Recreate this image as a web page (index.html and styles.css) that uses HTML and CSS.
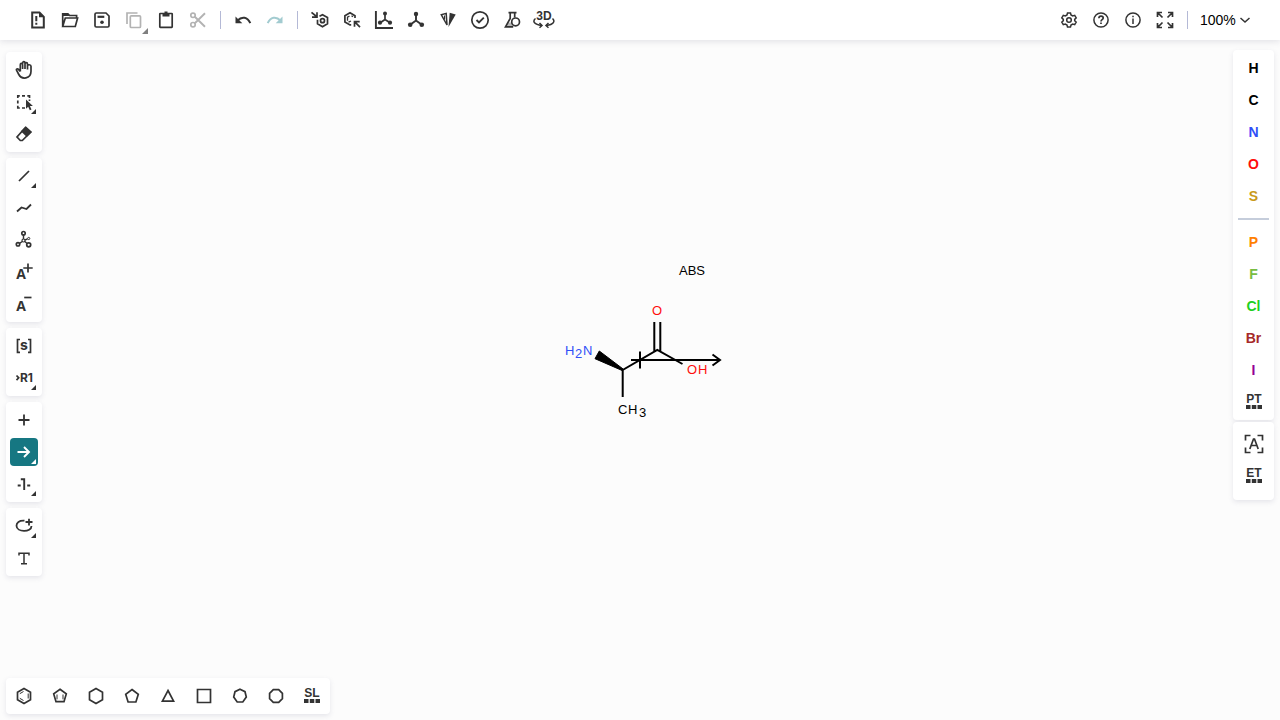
FILE: index.html
```html
<!DOCTYPE html>
<html lang="en">
<head>
<meta charset="utf-8">
<title>Molecule editor</title>
<link rel="stylesheet" href="styles.css">
</head>
<body>
<div class="app">
  <header class="topbar">
    <div class="group">
      <button class="tool" aria-label="Clear canvas"><svg class="icon" viewBox="0 0 24 24"><path d="M6.200 4.500h7.300l4.300 4.300v10.700H6.200z" stroke-width="2"/><path d="M13 4v5.200h5.200z" class="fill"/><path d="M10.300 8v5.200M10.300 14.700v2" stroke-width="2"/></svg></button>
      <button class="tool" aria-label="Open"><svg class="icon" viewBox="0 0 24 24"><path d="M4.700 18V5.800h5.200l1.700 1.700h7V10M4.700 18.500 7.300 10h12.300l-2.300 8.500z"/><path d="M4.500 5.500h5l2 2.500h-7z" class="fill"/></svg></button>
      <button class="tool" aria-label="Save"><svg class="icon" viewBox="0 0 24 24"><path d="M5 6.300Q5 5 6.300 5h9.700l3 3v9.700q0 1.300-1.300 1.300H6.300Q5 19 5 17.700z"/><path d="M7.500 8.800h6.800" stroke-width="2.200"/><circle cx="12" cy="14.300" r="1.800" class="fill"/></svg></button>
      <button class="tool off more edge" aria-label="Copy" disabled><svg class="icon" viewBox="0 0 24 24"><rect x="8.300" y="7.800" width="10.200" height="11.700" rx="1"/><path d="M5 16V5h10.500"/></svg></button>
      <button class="tool" aria-label="Paste"><svg class="icon" viewBox="0 0 24 24"><rect x="5.800" y="5.500" width="12.400" height="13.800" rx=".5"/><path d="M8.500 5h7v3.500h-7zM10.500 3.500h3V6h-3z" class="fill"/></svg></button>
      <button class="tool off" aria-label="Cut" disabled><svg class="icon" viewBox="0 0 24 24"><circle cx="7" cy="7.300" r="2.200"/><circle cx="7" cy="16.700" r="2.200"/><path d="M8.800 8.800 19 18.800M8.800 15.200 19 5.200" stroke-width="1.900"/></svg></button>
    </div>
    <span class="rule"></span>
    <div class="group">
      <button class="tool" aria-label="Undo"><svg class="icon" viewBox="0 0 24 24"><path d="M6.500 12.500c4.500-4.500 10-3.500 12.800 2.700" stroke-width="2"/><path d="M4.500 8.500v6.700h6.800z" class="fill"/></svg></button>
      <button class="tool redo" aria-label="Redo" disabled><svg class="icon" viewBox="0 0 24 24"><path d="M17.500 12.500C13 8 7.500 9 4.700 15.200" stroke-width="2"/><path d="M19.500 8.500v6.700h-6.800z" class="fill"/></svg></button>
    </div>
    <span class="rule"></span>
    <div class="group">
      <button class="tool" aria-label="Aromatize"><svg class="icon" viewBox="0 0 24 24"><path d="m11.500 8.300 3-1.600 5 2.900v6.200l-5 2.900-5-2.900v-4M3.500 4.300l5 4.200M9 4.200v5H4"/><circle cx="14.500" cy="12.700" r="2"/></svg></button>
      <button class="tool" aria-label="Dearomatize"><svg class="icon" viewBox="0 0 24 24"><path d="M15 10V7.700L10 4.800 4.900 7.700v6.200l5.100 3h1.200M20 19.200l-5-5M14.500 18.700v-5h5.200"/><path d="M7.500 12.800V9.200l2-1.200M11.500 7.800l1.500 1M8.500 14.200l2.500-1.200" stroke-width="1.300"/></svg></button>
      <button class="tool" aria-label="Layout"><svg class="icon" viewBox="0 0 24 24"><path d="M3.900 3v17H21" stroke-width="1.900"/><path d="M13 6v5.500L8.300 14.700M13 11.500l5 3.200"/><circle cx="13" cy="5.500" r="2" class="fill"/><circle cx="8" cy="14.700" r="2.100" class="fill"/><circle cx="18" cy="14.700" r="2.100" class="fill"/></svg></button>
      <button class="tool" aria-label="Clean up"><svg class="icon" viewBox="0 0 24 24"><path d="M12 6.500v6l-5.500 4M12 12.500l5.500 4" stroke-width="1.900"/><circle cx="12" cy="6" r="2.200" class="fill"/><circle cx="6.200" cy="16.700" r="2.300" class="fill"/><circle cx="17.800" cy="16.700" r="2.300" class="fill"/></svg></button>
      <button class="tool" aria-label="Calculate CIP"><svg class="icon" viewBox="0 0 24 24"><path d="M12.500 19 13.700 4.700l6 1.800z" class="fill"/><path d="m5.300 6.800 4.900-1.400.8 11.600z" stroke-width="1.500"/><path d="M8.500 7.500v4" stroke-width="1.200"/></svg></button>
      <button class="tool" aria-label="Check structure"><svg class="icon" viewBox="0 0 24 24"><circle cx="12" cy="12" r="8.200" stroke-width="1.700"/><path d="m8.500 12 2.500 2.500 4.800-4.800" stroke-width="1.900"/></svg></button>
      <button class="tool" aria-label="Calculated values"><svg class="icon" viewBox="0 0 24 24"><path d="M8.500 4.700h8M10.200 5v5.500l-4.700 8.300h7.700M14.700 5v4.500"/><circle cx="15.600" cy="13.900" r="3.900"/><path d="M7.500 14.500h4l2 4.300H5.500z" class="fill" opacity=".35"/></svg></button>
      <button class="tool" aria-label="3D viewer"><svg class="icon" viewBox="0 0 24 24"><text x="12" y="12" class="glyph three">3D</text><path d="M3.500 10.500C0 13.500 2.500 16.500 9.500 17.500M20.500 10.500c3 3 1 6-6 7" stroke-width="1.500"/><path d="m7.500 15 2.500 2.500-2.500 2.200M16.500 15 14 17.500l2.500 2.200" stroke-width="1.500"/></svg></button>
    </div>
    <div class="group end">
      <button class="tool" aria-label="Settings"><svg class="icon" viewBox="0 0 24 24"><path d="M10.500 5h3l.5 2 1.700 1 2-.6 1.500 2.500-1.500 1.500v1.300l1.500 1.500-1.500 2.500-2-.6-1.700 1-.5 2h-3l-.5-2-1.700-1-2 .6-1.500-2.500 1.500-1.500v-1.300L4.800 9.900l1.500-2.500 2 .6 1.700-1z" stroke-width="1.500"/><circle cx="12" cy="12" r="2.300" stroke-width="1.500"/></svg></button>
      <button class="tool" aria-label="Help"><svg class="icon" viewBox="0 0 24 24"><circle cx="12" cy="12" r="7.100" stroke-width="1.500"/><path d="M9.900 10.200c0-3 4.300-2.700 4.300-.3 0 1.700-2.200 1.700-2.200 3.500M12 14.600v1.500"/></svg></button>
      <button class="tool" aria-label="About"><svg class="icon" viewBox="0 0 24 24"><circle cx="12" cy="12" r="7.100" stroke-width="1.500"/><path d="M12 10.500V16M12 7.700v1.500" stroke-width="1.500"/></svg></button>
      <button class="tool" aria-label="Full screen"><svg class="icon" viewBox="0 0 24 24"><path d="M4.500 9V4.500H9M15 4.500h4.500V9M4.500 15v4.500H9M15 19.500h4.500V15M4.500 4.500l5 5M19.500 4.500l-5 5M4.500 19.500l5-5M19.500 19.500l-5-5"/></svg></button>
    </div>
    <span class="rule"></span>
    <div class="zoom">
      <select class="zoom-select" aria-label="Zoom"><option>100%</option></select>
      <svg class="chevron" viewBox="0 0 12 12"><path d="m1.500 4 4.500 4 4.500-4"/></svg>
    </div>
  </header>

  <main class="work">
    <div class="canvas">
      <svg class="drawing" viewBox="540 260 200 200" role="img" aria-label="Alanine with reaction arrow">
        <g class="bonds">
          <path d="M622.700 397v-27L657.300 350l25.200 14M654.300 351v-29M660.300 351v-29"/>
          <path d="M631 360h89M640 351.500v17M712.500 354.500 720 360l-7.500 5.500"/>
          <path d="m599.300 351-4.300 7.700 27.200 11.800.9-1.500z" class="wedge"/>
        </g>
        <text x="679" y="275">ABS</text>
        <text x="652" y="315" class="oxygen">O</text>
        <g class="nitrogen"><text x="565" y="355">H</text><text x="575" y="358">2</text><text x="583" y="355">N</text></g>
        <g class="oxygen"><text x="687" y="374">O</text><text x="698" y="374">H</text></g>
        <g><text x="618" y="414">C</text><text x="628" y="414">H</text><text x="639" y="417">3</text></g>
      </svg>
    </div>

    <nav class="left" aria-label="Tools">
      <div class="card">
        <button class="tool" aria-label="Hand"><svg class="icon" viewBox="0 0 24 24"><path d="M8.300 13.500V6.700c0-1.800 2.300-1.800 2.300 0V11M10.600 6V5c0-1.800 2.400-1.800 2.400 0v6M13 6c0-1.800 2.500-1.800 2.500 0v5.500M15.500 8c0-1.800 3.500-1.600 3.500.3v5c0 8-9.500 8.500-12.200 3.200l-2.300-4.300c-.6-1.300 1.300-1.800 2-.8l1.800 2.100"/></svg></button>
        <button class="tool more" aria-label="Select"><svg class="icon" viewBox="0 0 24 24"><path d="M5.800 8V5.800h2M10 5.800h3M15.300 5.800h2.200V8M5.800 10.500v3M5.800 15.800V18h2M10 18h3M17.500 9.500v1.500"/><path d="M14 9.500v9.200l2.200-2 1.600 3.600 1.700-.8-1.600-3.400h3z" class="fill"/></svg></button>
        <button class="tool" aria-label="Erase"><svg class="icon" viewBox="0 0 24 24"><path d="M13.500 5.500 18.800 10l-8.500 8.500H8.300L5 15z"/><path d="m14 4.500 5.800 5.500-5 5-6-5.700z" class="fill"/></svg></button>
      </div>
      <div class="card">
        <button class="tool more" aria-label="Single bond"><svg class="icon" viewBox="0 0 24 24"><path d="M7 17 17 7"/></svg></button>
        <button class="tool" aria-label="Chain"><svg class="icon" viewBox="0 0 24 24"><path d="m5 15.500 4.500-4 5 1.500 4.500-4.500" stroke-width="1.800"/></svg></button>
        <button class="tool" aria-label="Stereochemistry"><svg class="icon" viewBox="0 0 24 24"><circle cx="11.500" cy="5.200" r="1.700"/><circle cx="6" cy="16.300" r="1.700"/><circle cx="16.700" cy="16.800" r="2"/><circle cx="16.700" cy="10.500" r="1.100" stroke-width="1"/><circle cx="11.500" cy="12.500" r="1.500" stroke-width="1.200"/><path d="M11.500 7v4M10.300 13.500 7.500 15.300M12.800 13.500l2.300 2M13 12l2.500-1.200" stroke-width="1.400"/></svg></button>
        <button class="tool" aria-label="Charge plus"><svg class="icon" viewBox="0 0 24 24"><text x="9" y="19" class="glyph letter">A</text><path d="M11.300 8h9.400M16 3.500v9" stroke-width="1.700"/></svg></button>
        <button class="tool" aria-label="Charge minus"><svg class="icon" viewBox="0 0 24 24"><text x="9" y="19" class="glyph letter">A</text><path d="M12.200 5.500h7.300"/></svg></button>
      </div>
      <div class="card">
        <button class="tool" aria-label="S-group"><svg class="icon" viewBox="0 0 24 24"><path d="M8 5.500H5.500v12.800H8M16 5.500h2.500v12.800H16" stroke-width="1.700"/><text x="12" y="16" class="glyph sgroup">s</text></svg></button>
        <button class="tool more" aria-label="R-group"><svg class="icon" viewBox="0 0 24 24"><path d="m4.500 9.500 2.200 2.300-2.200 2.300"/><text x="14.500" y="16" class="glyph rgroup">R1</text></svg></button>
      </div>
      <div class="card">
        <button class="tool" aria-label="Reaction plus"><svg class="icon" viewBox="0 0 24 24"><path d="M6.500 12h11M12 6.500v11" stroke-width="1.800"/></svg></button>
        <button class="tool more active" aria-label="Arrow" aria-pressed="true"><svg class="icon" viewBox="0 0 24 24"><path d="M5.500 12h11.500M12 7l5 5-5 5" stroke-width="1.900"/></svg></button>
        <button class="tool more" aria-label="Reaction mapping"><svg class="icon" viewBox="0 0 24 24"><path d="M5.700 13.500h3M15.200 13.500h3M8.800 7.300h3.400V18" stroke-width="1.900"/></svg></button>
      </div>
      <div class="card">
        <button class="tool more" aria-label="Shape"><svg class="icon" viewBox="0 0 24 24"><path d="M12.500 6.700C7 6.300 4.500 8.800 4.500 11.700c0 6.800 15 7 15 .3M13.500 8h7M17 4.700v6.700" stroke-width="1.800"/></svg></button>
        <button class="tool" aria-label="Text"><svg class="icon" viewBox="0 0 24 24"><path d="M7 9.500V7.300h10v2.200M12 7.500v10.300M9 17.700h6" stroke-width="1.500"/></svg></button>
      </div>
    </nav>

    <nav class="right" aria-label="Atoms">
      <div class="card">
        <button class="tool atom">H</button>
        <button class="tool atom">C</button>
        <button class="tool atom n">N</button>
        <button class="tool atom o">O</button>
        <button class="tool atom s">S</button>
        <span class="split"></span>
        <button class="tool atom p">P</button>
        <button class="tool atom f">F</button>
        <button class="tool atom cl">Cl</button>
        <button class="tool atom br">Br</button>
        <button class="tool atom i">I</button>
        <button class="tool" aria-label="Periodic table"><svg class="icon" viewBox="0 0 24 24"><text x="12" y="13" class="glyph table">PT</text><path d="M4 15h4.500v4H4zM9.800 15h4.500v4H9.800zM15.500 15H20v4h-4.500z" class="fill"/></svg></button>
      </div>
      <div class="card extras">
        <button class="tool" aria-label="Any atom"><svg class="icon" viewBox="0 0 24 24"><path d="M3.500 8.500v-5h5M15.500 3.500h5v5M3.500 15.500v5h5M15.500 20.500h5v-5"/><path d="m7.800 17 3.700-10h1l3.700 10M9 13.500h6"/></svg></button>
        <button class="tool" aria-label="Extended table"><svg class="icon" viewBox="0 0 24 24"><text x="12" y="13" class="glyph table">ET</text><path d="M4 15h4.500v4H4zM9.800 15h4.500v4H9.800zM15.500 15H20v4h-4.500z" class="fill"/></svg></button>
      </div>
    </nav>

    <nav class="card bottom" aria-label="Templates">
      <button class="tool" aria-label="Benzene"><svg class="icon" viewBox="0 0 24 24"><path d="m12 4.500 6.500 3.700v7.600L12 19.500l-6.500-3.700V8.200z"/><path d="M7.800 9.700 11.500 7.500M16.200 9.500v5M7.800 14.300l3.700 2.200" stroke-width="1"/></svg></button>
      <button class="tool" aria-label="Cyclopentadiene"><svg class="icon" viewBox="0 0 24 24"><path d="m12 5.200 6.300 4.700-2.300 7.800H8L5.700 9.900z"/><path d="M9 10.500v4.800M15 10.500v4.800" stroke-width="1"/></svg></button>
      <button class="tool" aria-label="Cyclohexane"><svg class="icon" viewBox="0 0 24 24"><path d="m12 4.500 6.500 3.700v7.600L12 19.500l-6.500-3.700V8.200z"/></svg></button>
      <button class="tool" aria-label="Cyclopentane"><svg class="icon" viewBox="0 0 24 24"><path d="m12 5.500 6.300 4.700-2.400 7.800H8.100L5.700 10.200z"/></svg></button>
      <button class="tool" aria-label="Cyclopropane"><svg class="icon" viewBox="0 0 24 24"><path d="m12 6.500 5.600 10.700H6.400z"/></svg></button>
      <button class="tool" aria-label="Cyclobutane"><svg class="icon" viewBox="0 0 24 24"><path d="M5.500 5.500h13v13h-13z"/></svg></button>
      <button class="tool" aria-label="Cycloheptane"><svg class="icon" viewBox="0 0 24 24"><path d="m12 5.300 5 2.400 1.300 5.300-3.500 5H9.200l-3.500-5L7 7.700z"/></svg></button>
      <button class="tool" aria-label="Cyclooctane"><svg class="icon" viewBox="0 0 24 24"><path d="M9.300 5.600h5.400l3.700 3.700v5.400l-3.700 3.700H9.300l-3.700-3.700V9.300z"/></svg></button>
      <button class="tool" aria-label="Structure library"><svg class="icon" viewBox="0 0 24 24"><text x="12" y="13" class="glyph table">SL</text><path d="M4 15h4.500v4H4zM9.800 15h4.500v4H9.800zM15.500 15H20v4h-4.500z" class="fill"/></svg></button>
    </nav>
  </main>
</div>
</body>
</html>
```
FILE: styles.css
```css
* { box-sizing: border-box; }

body {
  margin: 0;
  background: #fcfcfc;
  color: #000;
  font-family: "Liberation Sans", Arial, sans-serif;
  font-size: 14px;
}

.app {
  position: relative;
  display: flex;
  flex-direction: column;
  min-height: 100vh;
}

.topbar {
  position: relative;
  z-index: 1;
  display: flex;
  align-items: center;
  gap: 8px;
  padding: 6px 0 6px 24px;
  background: #fff;
  box-shadow: 0 2px 6px rgba(103, 104, 132, 0.16);
}

.group { display: flex; gap: 4px; }
.end { margin-left: auto; }

.rule {
  width: 1px;
  height: 18px;
  background: #b4b9d6;
}

.tool {
  position: relative;
  display: flex;
  flex: none;
  align-items: center;
  justify-content: center;
  width: 28px;
  height: 28px;
  padding: 0;
  border: 0;
  border-radius: 4px;
  background: none;
  color: #333;
  font: inherit;
}

.icon {
  flex: none;
  width: 24px;
  height: 24px;
  fill: none;
  stroke: currentColor;
  stroke-width: 1.7;
}

.icon .fill { fill: currentColor; stroke: none; }
.off { color: #b3b3b3; }
.redo { color: #a2cbd0; }
.active { background: #167782; color: #fff; }

.more::after {
  content: "";
  position: absolute;
  right: 2px;
  bottom: 2px;
  width: 6px;
  height: 6px;
  background: currentColor;
  clip-path: polygon(100% 0, 100% 100%, 0 100%);
}

.edge::after { right: 0; bottom: 0; background: #7f7f7f; }

.glyph {
  fill: currentColor;
  stroke: none;
  font-family: "Liberation Sans", Arial, sans-serif;
  font-weight: 700;
  text-anchor: middle;
}

.letter { font-family: "Open Sans", sans-serif; font-size: 14px; }
.table { font-size: 12px; }
.sgroup { font-family: Inter, sans-serif; font-size: 14px; }
.rgroup { font-family: Inter, sans-serif; font-size: 12px; }
.three { font-size: 12px; }

.zoom {
  position: relative;
  width: 84px;
}

.zoom-select {
  width: 100%;
  height: 28px;
  padding: 0 0 0 4px;
  border: 0;
  appearance: none;
  background: none;
  color: #000;
  font: inherit;
}

.chevron {
  position: absolute;
  top: 8px;
  left: 43px;
  width: 12px;
  height: 12px;
  fill: none;
  stroke: #333;
  stroke-width: 1.5;
  pointer-events: none;
}

.work {
  display: grid;
  flex: 1;
  grid-template-columns: auto 1fr auto;
  grid-template-rows: 1fr auto;
  padding: 0 6px 6px;
}

/* The canvas lies beneath every toolbar. */
.canvas {
  position: absolute;
  inset: 0;
  display: flex;
  align-items: center;
  justify-content: center;
}

.drawing {
  width: 200px;
  height: 200px;
  font-size: 13px;
}

.bonds { fill: none; stroke: #000; stroke-width: 2; }
.wedge { fill: #000; stroke-width: 1; }
.nitrogen { fill: #304ff7; }
.oxygen { fill: #ff0d0d; }

.card {
  position: relative;
  display: flex;
  flex-direction: column;
  align-items: center;
  gap: 4px;
  padding: 4px;
  border-radius: 4px;
  background: #fff;
  box-shadow: 0 2px 5px rgba(103, 104, 132, 0.15);
}

.left {
  display: flex;
  flex-direction: column;
  gap: 6px;
  padding-top: 12px;
}

.left .more::after { width: 5px; height: 5px; }

.right {
  display: flex;
  flex-direction: column;
  grid-column: 3;
  gap: 2px;
  width: 41px;
  padding-top: 10px;
}

.extras { padding: 8px 4px 10px; }

.bottom {
  flex-direction: row;
  grid-column: 1 / -1;
  grid-row: 2;
  gap: 8px;
  justify-self: start;
}

.atom { color: #000; font-weight: 700; }
.n { color: #304ff7; }
.o { color: #ff0d0d; }
.s { color: #c99a19; }
.p { color: #ff8000; }
.f { color: #78bc42; }
.cl { color: #1fd01f; }
.br { color: #a62929; }
.i { color: #940094; }

.split {
  width: 31px;
  height: 2px;
  margin: 4px 0;
  background: #c5cddb;
}
```
